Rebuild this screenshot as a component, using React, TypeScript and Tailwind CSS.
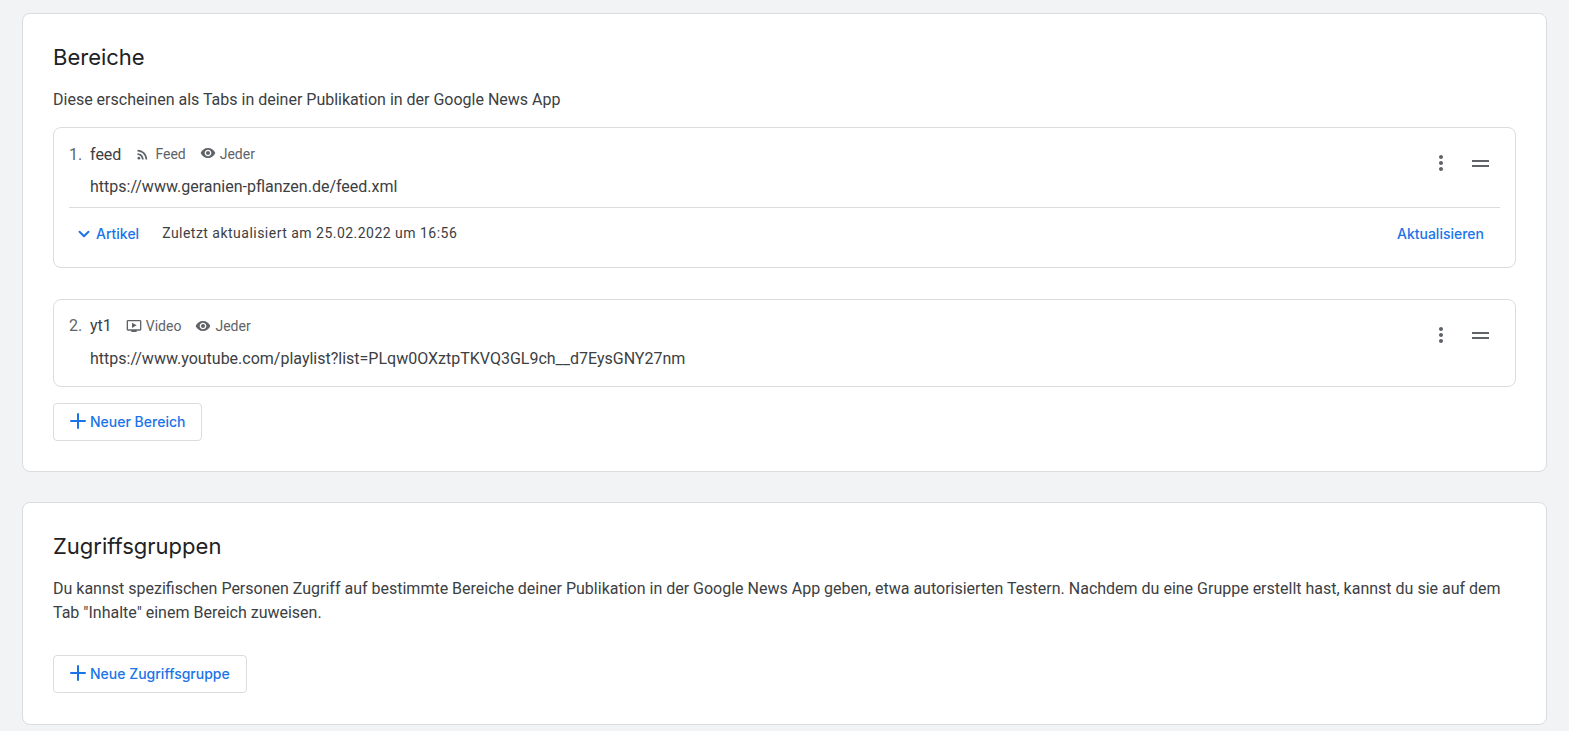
import { ChevronDown, Plus } from "lucide-react";

function RssIcon() {
  return (
    <svg viewBox="0 0 24 24" className="w-[15px] h-[15px] fill-[#5f6368]">
      <circle cx="6.2" cy="17.8" r="2.2" />
      <path d="M4 4.44v2.83c7.03 0 12.73 5.7 12.73 12.73h2.83c0-8.59-6.97-15.56-15.56-15.56zm0 5.66v2.83c3.9 0 7.07 3.17 7.07 7.07h2.83c0-5.47-4.43-9.9-9.9-9.9z" />
    </svg>
  );
}

function EyeIcon() {
  return (
    <svg viewBox="0 0 24 24" className="w-4 h-4 fill-[#5f6368]">
      <path d="M12 4.5C7 4.5 2.73 7.61 1 12c1.73 4.39 6 7.5 11 7.5s9.27-3.11 11-7.5c-1.73-4.39-6-7.5-11-7.5zM12 17c-2.76 0-5-2.24-5-5s2.24-5 5-5 5 2.24 5 5-2.24 5-5 5zm0-8c-1.66 0-3 1.34-3 3s1.34 3 3 3 3-1.34 3-3-1.34-3-3-3z" />
    </svg>
  );
}

function VideoIcon() {
  return (
    <svg viewBox="0 0 24 24" className="w-4 h-4 fill-[#5f6368]">
      <path d="M21 3H3c-1.1 0-2 .9-2 2v12c0 1.1.9 2 2 2h5v2h8v-2h5c1.1 0 2-.9 2-2V5c0-1.1-.9-2-2-2zm0 14H3V5h18v12zm-5-6l-7 4V7l7 4z" />
    </svg>
  );
}

function RowActions() {
  return (
    <div className="flex items-center">
      <svg viewBox="0 0 24 24" className="w-6 h-6 fill-[#5f6368]">
        <path d="M12 8c1.1 0 2-.9 2-2s-.9-2-2-2-2 .9-2 2 .9 2 2 2zm0 2c-1.1 0-2 .9-2 2s.9 2 2 2 2-.9 2-2-.9-2-2-2zm0 6c-1.1 0-2 .9-2 2s.9 2 2 2 2-.9 2-2-.9-2-2-2z" />
      </svg>
      <div className="ml-[19px] w-[17px] flex flex-col gap-[3px]">
        <div className="h-[2px] bg-[#5f6368]" />
        <div className="h-[2px] bg-[#5f6368]" />
      </div>
    </div>
  );
}

function AddButton({ label }: { label: string }) {
  return (
    <button className="h-[38px] pl-3 pr-4 pb-[2px] flex items-center bg-white border border-[#dadce0] rounded font-['Inter',sans-serif] text-[14px] font-medium text-[#1a73e8]">
      <Plus className="w-6 h-6" strokeWidth={2} />
      {label}
    </button>
  );
}

export default function App() {
  return (
    <div className="min-h-[731px] bg-[#f1f3f4] pl-[22px] pr-[22px] pt-[13px] pb-[6px] font-['Roboto',sans-serif] text-[16px] text-[#3c4043] overflow-hidden">
      <section className="bg-white border border-[#dadce0] rounded-lg h-[459px] pt-[29px] px-[30px]">
        <h2 className="font-['Inter',sans-serif] text-[22px] leading-[28px] text-[#202124]">Bereiche</h2>
        <p className="mt-[19px] leading-[20px]">Diese erscheinen als Tabs in deiner Publikation in der Google News App</p>

        <div className="mt-[17px] h-[141px] border border-[#dadce0] rounded-lg pl-[15px] pr-[15px]">
          <div className="flex justify-between pr-[11px]">
            <div>
              <div className="flex items-center h-[20px] mt-[17px]">
                <span className="w-[21px] text-[#5f6368]">1.</span>
                <span>feed</span>
                <span className="ml-[14px] mb-[2px]"><RssIcon /></span>
                <span className="ml-[5px] mb-[2px] text-[14px] text-[#5f6368]">Feed</span>
                <span className="ml-[14px] mb-1"><EyeIcon /></span>
                <span className="ml-1 mb-[2px] text-[14px] text-[#5f6368]">Jeder</span>
              </div>
              <div className="mt-3 ml-[21px] leading-[20px]">https://www.geranien-pflanzen.de/feed.xml</div>
            </div>
            <div className="mt-[23px] h-fit"><RowActions /></div>
          </div>
          <div className="mt-[10px] border-t border-[#dadce0] h-[50px] pt-[2px] flex items-center justify-between pl-[6px] pr-4">
            <div className="flex items-center">
              <ChevronDown className="w-[18px] h-[18px] text-[#1a73e8]" strokeWidth={2.5} />
              <span className="ml-[3px] font-['Inter',sans-serif] text-[14px] font-medium text-[#1a73e8]">Artikel</span>
              <span className="ml-[23px] text-[14px] tracking-[0.48px]">Zuletzt aktualisiert am 25.02.2022 um 16:56</span>
            </div>
            <span className="font-['Inter',sans-serif] text-[14px] font-medium text-[#1a73e8]">Aktualisieren</span>
          </div>
        </div>

        <div className="mt-[31px] h-[88px] border border-[#dadce0] rounded-lg pl-[15px] pr-[15px] flex justify-between">
          <div>
            <div className="flex items-center h-[20px] mt-4">
              <span className="w-[21px] text-[#5f6368]">2.</span>
              <span>yt1</span>
              <span className="ml-[14px]"><VideoIcon /></span>
              <span className="ml-1 text-[14px] text-[#5f6368]">Video</span>
              <span className="ml-[14px]"><EyeIcon /></span>
              <span className="ml-1 text-[14px] text-[#5f6368]">Jeder</span>
            </div>
            <div className="mt-[13px] ml-[21px] leading-[20px]">https://www.youtube.com/playlist?list=PLqw0OXztpTKVQ3GL9ch__d7EysGNY27nm</div>
          </div>
          <div className="mt-[23px] h-fit pr-[11px]"><RowActions /></div>
        </div>

        <div className="mt-4 flex"><AddButton label="Neuer Bereich" /></div>
      </section>

      <section className="mt-[30px] bg-white border border-[#dadce0] rounded-lg h-[223px] pt-[29px] px-[30px]">
        <h2 className="font-['Inter',sans-serif] text-[22px] leading-[28px] text-[#202124]">Zugriffsgruppen</h2>
        <p className="mt-[17px] leading-[24px]">
          Du kannst spezifischen Personen Zugriff auf bestimmte Bereiche deiner Publikation in der Google News App geben, etwa autorisierten Testern. Nachdem du eine Gruppe erstellt hast, kannst du sie auf dem Tab "Inhalte" einem Bereich zuweisen.
        </p>
        <div className="mt-[30px] flex"><AddButton label="Neue Zugriffsgruppe" /></div>
      </section>
    </div>
  );
}
